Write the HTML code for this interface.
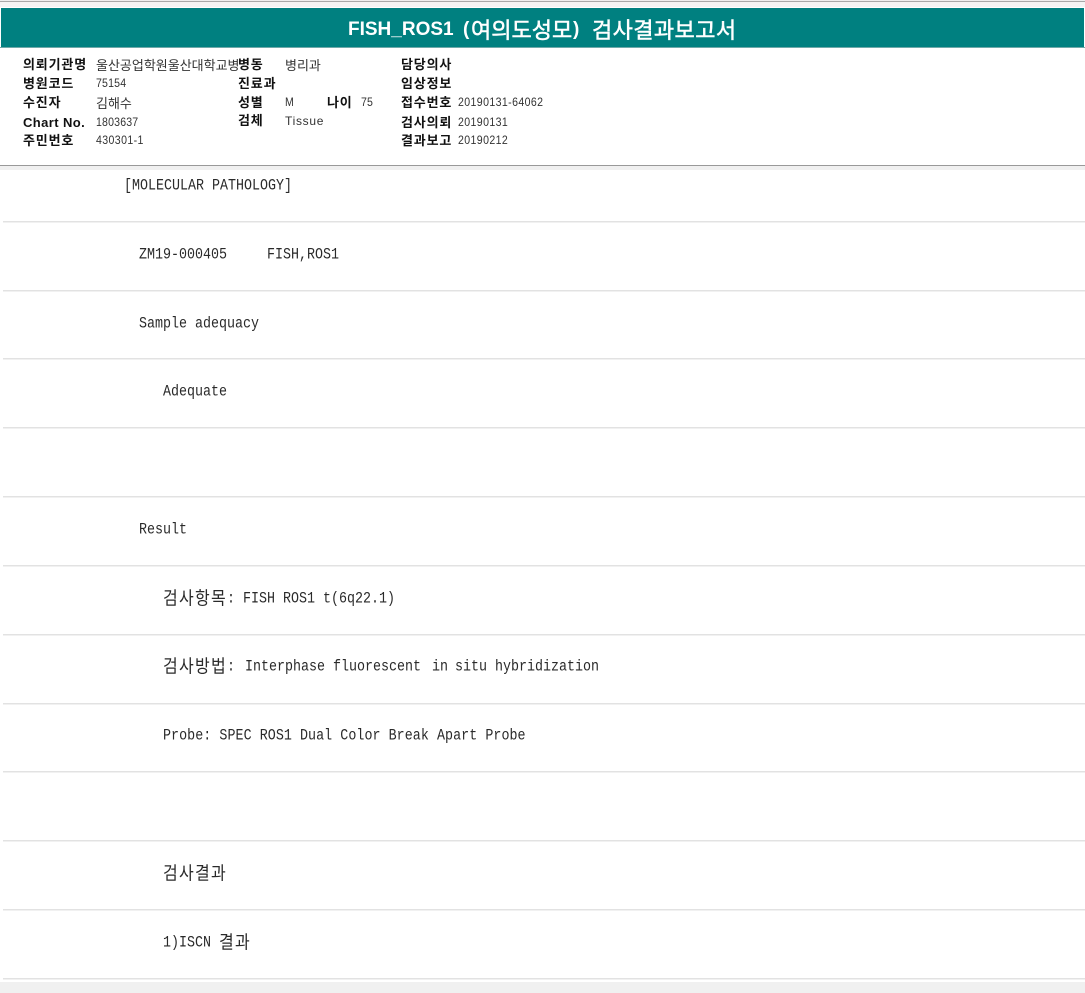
<!DOCTYPE html>
<html lang="ko"><head><meta charset="utf-8"><title>FISH_ROS1</title>
<style>
html,body{margin:0;padding:0;background:#fff}
#p{position:relative;width:1085px;height:993px;overflow:hidden;background:#fff;font-family:"Liberation Mono","WenQuanYi Zen Hei","Noto Sans CJK KR",monospace;color:#222}
#p div{position:absolute}
.h{left:0;width:1085px}
.hr{left:3px;width:1082px;height:1px;background:#e2e2e2;box-shadow:0 1px 0 #f1f1f1}
.t{font-size:13.33px;line-height:18px;white-space:pre;transform-origin:0 50%;transform:scaleY(1.15);color:#2a2a2a}
.t span{position:relative;top:2px;font-size:16px;line-height:0;letter-spacing:1.28px;font-family:"WenQuanYi Zen Hei","Noto Sans CJK KR",sans-serif;font-weight:400}
.l{font:700 13px/15px "Liberation Sans","Noto Sans CJK KR",sans-serif;color:#111;white-space:pre;letter-spacing:.84px}
.v{font:400 12px/15px "Liberation Sans",sans-serif;color:#333;white-space:pre;transform-origin:0 50%;transform:scaleX(.88);letter-spacing:.2px}
.k{font:400 13px/15px "WenQuanYi Zen Hei","Noto Sans CJK KR",sans-serif;color:#333;white-space:pre}
.ti{top:9px;height:38px;font:700 19px/42px "Liberation Sans",sans-serif;color:#fff;white-space:pre}
.tk{top:8px;height:39px;font:400 22px/42px "Noto Sans CJK KR","WenQuanYi Zen Hei",sans-serif;color:#fff;white-space:pre;-webkit-text-stroke:.5px #fff}
</style></head><body><div id="p">
<div class="h" style="top:0;height:1px;background:#eee"></div>
<div class="h" style="top:1px;height:1px;background:#a8a8a8"></div>
<div class="h" style="top:2px;height:5px;background:#f4f4f4"></div>
<div style="left:1px;top:8px;width:1083px;height:39px;background:#008080"></div>
<div class="h" style="top:47px;height:1px;background:#6fa9a9"></div>
<div class="ti" style="left:348px">FISH_ROS1</div>
<div class="ti" style="left:463px">(</div>
<div class="tk" style="left:471px">여의도성모</div>
<div class="ti" style="left:573px">)</div>
<div class="tk" style="left:592px;letter-spacing:.4px">검사결과보고서</div>

<div class="l" style="left:23px;top:57px">의뢰기관명</div><div class="k" style="left:96px;top:57px">울산공업학원울산대학교병원</div>
<div class="l" style="left:238px;top:57px;background:#fff">병동</div><div class="k" style="left:285px;top:57px">병리과</div>
<div class="l" style="left:401px;top:57px">담당의사</div>
<div class="l" style="left:23px;top:76px">병원코드</div><div class="v" style="left:96px;top:76px">75154</div>
<div class="l" style="left:238px;top:76px">진료과</div>
<div class="l" style="left:401px;top:76px">임상정보</div>
<div class="l" style="left:23px;top:95px">수진자</div><div class="k" style="left:96px;top:95px">김해수</div>
<div class="l" style="left:238px;top:95px">성별</div><div class="v" style="left:285px;top:95px">M</div>
<div class="l" style="left:327px;top:95px">나이</div><div class="v" style="left:361px;top:95px">75</div>
<div class="l" style="left:401px;top:95px">접수번호</div><div class="v" style="left:458px;top:95px;letter-spacing:.45px">20190131-64062</div>
<div class="l" style="left:23px;top:115px;letter-spacing:.4px">Chart No.</div><div class="v" style="left:96px;top:115px">1803637</div>
<div class="l" style="left:238px;top:113px">검체</div><div class="v" style="left:285px;top:114px;transform:none;letter-spacing:.7px">Tissue</div>
<div class="l" style="left:401px;top:115px">검사의뢰</div><div class="v" style="left:458px;top:115px;letter-spacing:.45px">20190131</div>
<div class="l" style="left:23px;top:133px">주민번호</div><div class="v" style="left:96px;top:133px;letter-spacing:.45px">430301-1</div>
<div class="l" style="left:401px;top:133px">결과보고</div><div class="v" style="left:458px;top:133px;letter-spacing:.45px">20190212</div>

<div class="h" style="top:165px;height:1px;background:#999"></div>
<div class="h" style="top:166px;height:4px;background:#f0f0f0"></div>

<div class="t" style="left:124px;top:178px">[MOLECULAR PATHOLOGY]</div>
<div class="hr" style="top:221px"></div>
<div class="t" style="left:139px;top:247px">ZM19-000405     FISH,ROS1</div>
<div class="hr" style="top:290px"></div>
<div class="t" style="left:139px;top:316px">Sample adequacy</div>
<div class="hr" style="top:358px"></div>
<div class="t" style="left:163px;top:384px">Adequate</div>
<div class="hr" style="top:427px"></div>
<div class="hr" style="top:496px"></div>
<div class="t" style="left:139px;top:522px">Result</div>
<div class="hr" style="top:565px"></div>
<div class="t" style="left:163px;top:591px"><span>검사항목</span>: FISH ROS1 t(6q22.1)</div>
<div class="hr" style="top:634px"></div>
<div class="t" style="left:163px;top:659px"><span>검사방법</span>: <i style="font-style:normal;margin-left:2px">Interphase fluorescent </i><i style="font-style:normal;margin-left:3px">in </i><i style="font-style:normal;margin-left:-1px">situ hybridization</i></div>
<div class="hr" style="top:703px"></div>
<div class="t" style="left:163px;top:728px;letter-spacing:.06px">Probe: SPEC ROS1 Dual Color Break Apart Probe</div>
<div class="hr" style="top:771px"></div>
<div class="hr" style="top:840px"></div>
<div class="t" style="left:163px;top:866px"><span>검사결과</span></div>
<div class="hr" style="top:909px"></div>
<div class="t" style="left:163px;top:935px">1)ISCN <span>결과</span></div>
<div class="hr" style="top:978px"></div>
<div class="h" style="top:982px;height:11px;background:#f0f0f0"></div>
</div></body></html>
